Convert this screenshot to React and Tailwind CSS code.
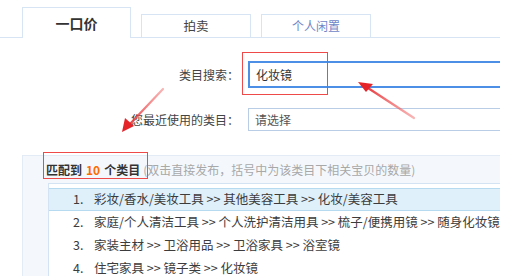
import React from "react";

const rows = [
  "彩妆/香水/美妆工具 >> 其他美容工具 >> 化妆/美容工具",
  "家庭/个人清洁工具 >> 个人洗护清洁用具 >> 梳子/便携用镜 >> 随身化妆镜",
  "家装主材 >> 卫浴用品 >> 卫浴家具 >> 浴室镜",
  "住宅家具 >> 镜子类 >> 化妆镜",
];

export default function App() {
  return (
    <div
      className="relative w-[515px] h-[276px] overflow-hidden bg-white text-[#3a3a3a]"
      style={{ fontFamily: '"Noto Sans CJK SC", "Noto Sans", sans-serif' }}
    >
      <div className="w-[500px] overflow-hidden">
        {/* tabs */}
        <div className="flex items-end h-[38px] border-b border-[#d7e4f4] pl-[22px]">
          <div className="w-[109px] h-[31px] -mb-px bg-white border border-b-0 border-[#d7e4f4] flex items-center justify-center text-[14px] font-bold text-[#333] leading-none">
            一口价
          </div>
          <div className="ml-[10px] w-[110px] h-[23px] border border-b-0 border-[#d7e4f4] flex items-center justify-center text-[12.5px] text-[#444] leading-none">
            拍卖
          </div>
          <div className="ml-[10px] w-[110px] h-[23px] border border-b-0 border-[#d7e4f4] flex items-center justify-center text-[12px] text-[#6f86c8] leading-none">
            个人闲置
          </div>
        </div>

        {/* form */}
        <div className="flex items-center mt-[23px] h-[27px]">
          <div className="w-[240px] pr-[1px] text-right text-[12px] text-[#444] leading-none">类目搜索：</div>
          <div className="ml-[8px] flex-1 h-[27px] border-2 border-r-0 border-[#4b8fe6] flex items-center pl-[6px] text-[12px] text-[#333] leading-none">
            化妆镜
          </div>
        </div>
        <div className="flex items-center mt-[20px] h-[23px]">
          <div className="w-[240px] pr-[1px] text-right text-[12px] text-[#444] leading-none">您最近使用的类目：</div>
          <div className="ml-[8px] flex-1 h-[23px] border border-r-0 border-[#b9cde6] flex items-center pl-[6px] text-[12px] text-[#555] leading-none">
            请选择
          </div>
        </div>

        {/* result panel */}
        <div className="ml-[22px] mt-[24px] bg-[#f4f8fd] border-t border-l border-[#e2ebf6] pl-[25px]">
          <div className="h-[27px] flex items-center text-[12px] leading-none whitespace-nowrap">
            <span className="font-bold text-[#333] -ml-[2px]">匹配到</span>
            <span className="font-bold text-[#ff6a00] mx-[4px]">10</span>
            <span className="font-bold text-[#333]">个类目</span>
            <span className="text-[#a8a8a8] ml-[3px]">(双击直接发布，括号中为该类目下相关宝贝的数量)</span>
          </div>
          <div className="bg-white border-t border-l border-[#d3e3f3] pt-[4px]">
            {rows.map((r, i) => (
              <div
                key={i}
                className={
                  "h-[23px] flex items-center text-[12.5px] leading-none whitespace-nowrap text-[#3c3c3c] " +
                  (i === 0 ? "bg-[#dff0fb] border-y border-[#b6dbf1]" : "")
                }
              >
                <span className="shrink-0 w-[45px] pl-[24px]">{i + 1}.</span>
                <span>{r}</span>
              </div>
            ))}
          </div>
        </div>
      </div>

      {/* red highlight boxes */}
      <div className="absolute left-[242px] top-[52px] w-[86px] h-[43px] border border-[#ef4a4a]" />
      <div className="absolute left-[43px] top-[152px] w-[105px] h-[27px] border border-[#ef4a4a]" />

      {/* arrows */}
      <svg className="absolute left-0 top-0" width="515" height="276" viewBox="0 0 515 276">
        <defs>
          <linearGradient id="g1" x1="414" y1="118" x2="360" y2="83" gradientUnits="userSpaceOnUse">
            <stop offset="0" stopColor="#f26b6b" stopOpacity="0.5" />
            <stop offset="1" stopColor="#e5242a" />
          </linearGradient>
          <linearGradient id="g2" x1="163" y1="89" x2="122" y2="132" gradientUnits="userSpaceOnUse">
            <stop offset="0" stopColor="#f26b6b" stopOpacity="0.5" />
            <stop offset="1" stopColor="#e5242a" />
          </linearGradient>
        </defs>
        <path d="M414 118 L368 88" stroke="url(#g1)" strokeWidth="2.2" strokeLinecap="round" />
        <path d="M358 82 L373 84 L366 92 Z" fill="#e5242a" />
        <path d="M163 89 L129 125" stroke="url(#g2)" strokeWidth="2.2" strokeLinecap="round" />
        <path d="M122 132 L125 118 L134 126 Z" fill="#e5242a" />
      </svg>
    </div>
  );
}
